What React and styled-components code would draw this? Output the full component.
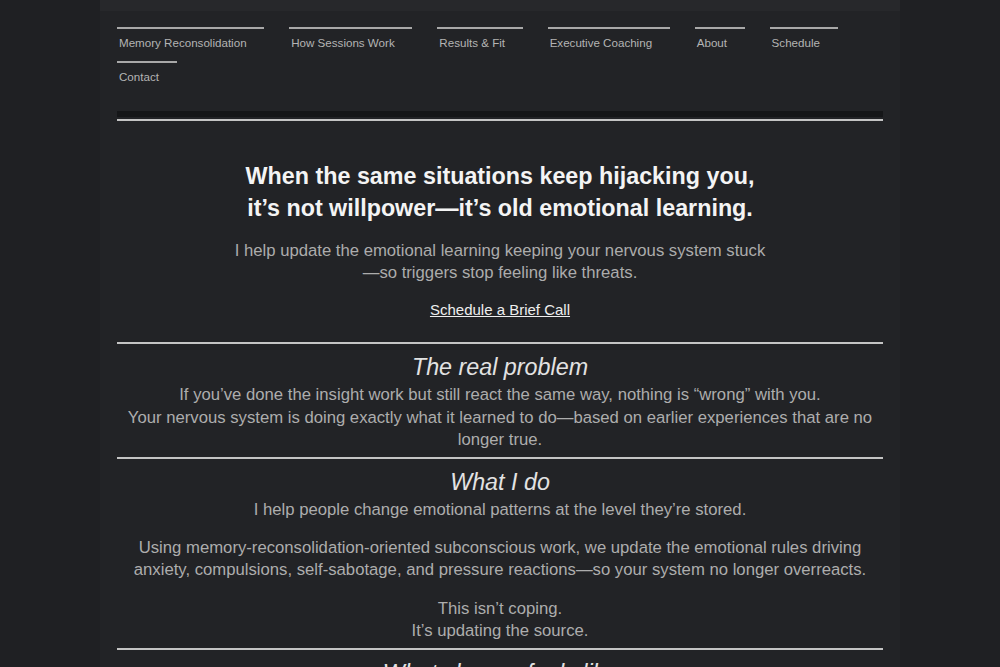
import styled, { createGlobalStyle } from "styled-components";

const GlobalStyle = createGlobalStyle`
  html, body {
    margin: 0;
    padding: 0;
    background: #1f2023;
  }
  body {
    font-family: "Liberation Sans", Arial, sans-serif;
  }
`;

const navLinks = [
  "Memory Reconsolidation",
  "How Sessions Work",
  "Results & Fit",
  "Executive Coaching",
  "About",
  "Schedule",
  "Contact",
];

export default function App() {
  return (
    <>
      <GlobalStyle />
      <Page>
        <TopStrip />
        <Inner>
          <Header>
            <Nav>
              {navLinks.map((label) => (
                <NavItem key={label} href="#">
                  {label}
                </NavItem>
              ))}
            </Nav>
          </Header>
          <Rule />

          <Hero>
            <Title>
              When the same situations keep hijacking you,
              <br />
              it’s not willpower—it’s old emotional learning.
            </Title>
            <Lead>
              I help update the emotional learning keeping your nervous system stuck
              <br />
              —so triggers stop feeling like threats.
            </Lead>
            <CallLink href="#">Schedule a Brief Call</CallLink>
          </Hero>

          <Section>
            <SectionTitle>The real problem</SectionTitle>
            <Text>
              If you’ve done the insight work but still react the same way, nothing is
              “wrong” with you.
              <br />
              Your nervous system is doing exactly what it learned to do—based on
              earlier experiences that are no longer true.
            </Text>
          </Section>

          <Section>
            <SectionTitle>What I do</SectionTitle>
            <Text>I help people change emotional patterns at the level they’re stored.</Text>
            <Text>
              Using memory-reconsolidation-oriented subconscious work, we update the
              emotional rules driving anxiety, compulsions, self-sabotage, and pressure
              reactions—so your system no longer overreacts.
            </Text>
            <Text>
              This isn’t coping.
              <br />
              It’s updating the source.
            </Text>
          </Section>

          <Section>
            <SectionTitle>What change feels like</SectionTitle>
            <Text>
              Situations that used to grab you simply stop landing the same way.
            </Text>
          </Section>
        </Inner>
      </Page>
    </>
  );
}

const Page = styled.div`
  width: 800px;
  margin: 0 auto;
  min-height: 667px;
  background: #222326;
`;

const TopStrip = styled.div`
  height: 11px;
  background: #27282b;
`;

const Inner = styled.div`
  padding: 0 17px;
`;

const Header = styled.header`
  padding-top: 16px;
  padding-bottom: 16px;
  border-bottom: 6px solid #151618;
`;

const Nav = styled.nav`
  display: flex;
  flex-wrap: wrap;
  column-gap: 25px;
`;

const NavItem = styled.a`
  display: block;
  padding: 6px 17.6px 10px 2px;
  border-top: 2px solid #a8a8a8;
  font-size: 11.6px;
  line-height: 16px;
  color: #b4b4b4;
  text-decoration: none;
`;

const Rule = styled.hr`
  margin: 2px 0 0;
  border: none;
  border-top: 2px solid #c4c4c4;
`;

const Hero = styled.div`
  padding: 39px 0 23px;
  text-align: center;
`;

const Title = styled.h1`
  margin: 0;
  font-size: 23.3px;
  line-height: 32px;
  font-weight: 700;
  color: #f4f4f4;
`;

const Lead = styled.p`
  margin: 16px 0 0;
  font-size: 16.7px;
  line-height: 22px;
  color: #acacac;
`;

const CallLink = styled.a`
  display: inline-block;
  margin-top: 17px;
  font-size: 15px;
  line-height: 18px;
  color: #eeeeee;
  text-decoration: underline;
`;

const Section = styled.section`
  border-top: 2px solid #c4c4c4;
  padding: 9px 0 5px;
  text-align: center;
`;

const SectionTitle = styled.h2`
  margin: 0 0 3px;
  font-size: 23.3px;
  line-height: 28px;
  font-style: italic;
  font-weight: 400;
  color: #e2e2e2;
`;

const Text = styled.p`
  margin: 0 0 15.5px;
  font-size: 16.7px;
  line-height: 22.6px;
  color: #adadad;

  &:last-child {
    margin-bottom: 0;
  }
`;
